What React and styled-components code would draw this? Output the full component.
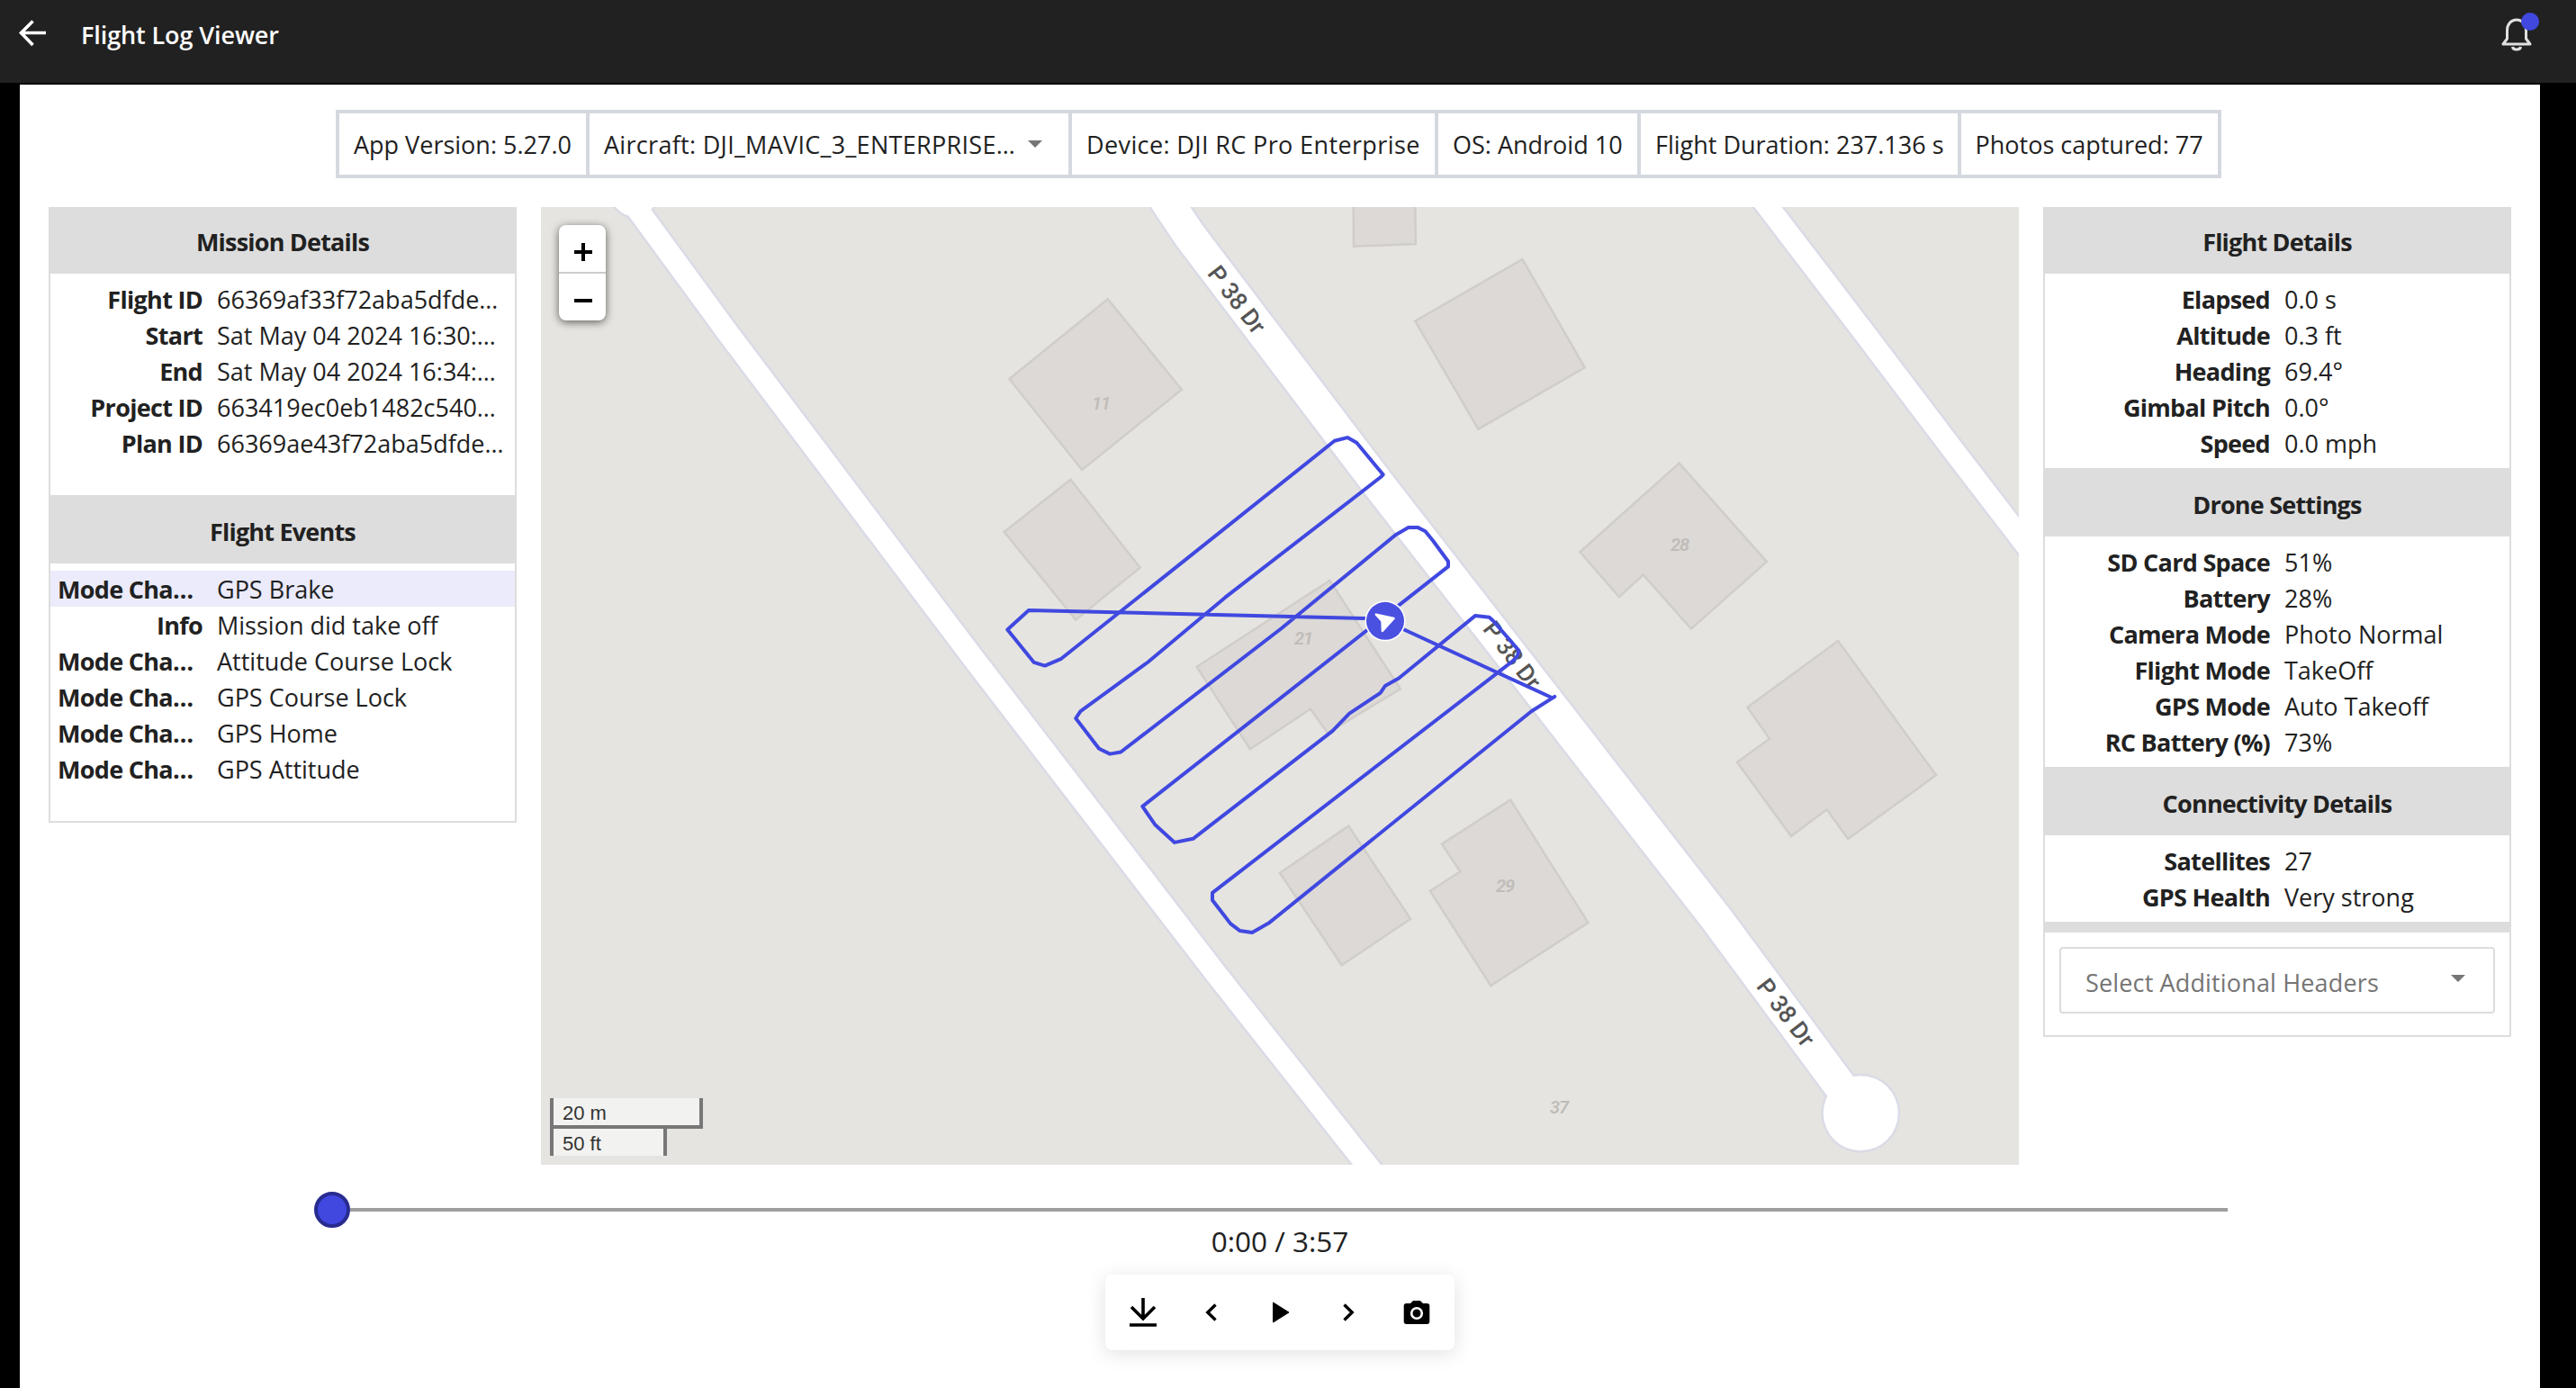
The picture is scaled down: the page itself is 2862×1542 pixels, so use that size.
import React from 'react';
import styled, { createGlobalStyle } from 'styled-components';

const GlobalStyle = createGlobalStyle`
  * {
    box-sizing: border-box;
  }

  body {
    margin: 0;
    background: #000000;
    color: #212121;
    font-family: "Open Sans", "Noto Sans", sans-serif;
    font-size: 27px;
  }
`;

const Page = styled.div`
  display: flex;
  flex-direction: column;
  height: 1542px;
  overflow: hidden;
`;

const TopBar = styled.header`
  display: flex;
  align-items: center;
  justify-content: space-between;
  height: 92px;
  padding: 0 48px 16px 20px;
  background: #212121;
  color: white;
`;

const TopLeft = styled.div`
  display: flex;
  align-items: center;
  gap: 38px;
`;

const Title = styled.h1`
  margin: 0;
  font-size: 27px;
  font-weight: 600;
  letter-spacing: -0.1px;
`;

const BellButton = styled.div`
  display: flex;
  position: relative;
`;

const Dot = styled.span`
  position: absolute;
  top: -4px;
  right: -7px;
  width: 20px;
  height: 20px;
  border-radius: 50%;
  background: #4048e0;
`;

const Content = styled.main`
  display: flex;
  flex-direction: column;
  flex: 1;
  margin: 2px 40px 0 22px;
  padding: 28px 32px 0;
  background: white;
`;

const InfoBar = styled.div`
  display: grid;
  grid-template-columns: 278px 536px 407px 225px 355.5px 285px;
  align-self: flex-start;
  height: 76px;
  margin-left: 319px;
  border: 4px solid #d5d9df;
`;

const InfoCell = styled.div`
  display: flex;
  align-items: center;
  padding-left: 16px;
  white-space: nowrap;
  letter-spacing: ${({ $spacing }) => $spacing || 0}px;
  border-right: 4px solid #d5d9df;

  &:last-child {
    border-right: none;
  }
`;

const Caret = styled.span`
  margin-left: ${({ $left }) => $left || 0}px;
  border-left: 8px solid transparent;
  border-right: 8px solid transparent;
  border-top: 8px solid #757575;
`;

const Columns = styled.div`
  display: flex;
  align-items: flex-start;
  gap: 27px;
  margin-top: 32px;
`;

const Panel = styled.section`
  width: 520px;
  border: 2px solid #dddddd;
  border-top: none;
`;

const PanelTitle = styled.h2`
  display: flex;
  align-items: center;
  justify-content: center;
  height: 76px;
  margin: 0;
  padding-top: 4px;
  background: #dddddd;
  font-size: 27px;
  font-weight: 700;
  letter-spacing: -0.8px;

  &:first-child {
    height: 74px;
    padding-top: 2px;
  }
`;

const Rows = styled.div`
  padding: 8px 0 ${({ $bottom }) => $bottom}px;
`;

const Row = styled.div`
  display: grid;
  grid-template-columns: ${({ $label }) => $label}px 1fr;
  column-gap: 16px;
  height: 40px;
  padding-left: 8px;
  line-height: 42px;
  white-space: nowrap;
  background: ${({ $active }) => ($active ? '#ebebfb' : 'transparent')};
`;

const Label = styled.span`
  font-weight: 700;
  letter-spacing: -0.7px;
  text-align: ${({ $clipped }) => ($clipped ? 'left' : 'right')};
`;

const Value = styled.span`
  letter-spacing: 0;
`;

const Strip = styled.div`
  height: 12px;
  background: #dddddd;
`;

const HeaderSelect = styled.div`
  display: flex;
  align-items: center;
  justify-content: space-between;
  height: 74px;
  margin: 16px 16px 24px;
  padding: 4px 31px 0 27px;
  border: 2px solid #dddddd;
  border-radius: 4px;
  color: #757575;
  letter-spacing: 0.15px;

  ${Caret} {
    margin-bottom: 8px;
  }
`;

const MapBox = styled.div`
  position: relative;
  width: 1642px;
  height: 1064px;
  background: #e5e4e0;

  > svg {
    display: block;
  }
`;

const ZoomControl = styled.div`
  position: absolute;
  top: 20px;
  left: 20px;
  width: 52px;
  border-radius: 8px;
  background: white;
  box-shadow: 0 2px 10px rgba(0, 0, 0, 0.6);
`;

const ZoomButton = styled.div`
  display: flex;
  align-items: center;
  justify-content: center;
  height: 52px;
  padding: 7px 0 0 2px;

  & + & {
    height: 54px;
    border-top: 2px solid #cccccc;
  }
`;

const Scale = styled.div`
  position: absolute;
  left: 10px;
  bottom: 10px;
`;

const ScaleLine = styled.div`
  width: ${({ $width }) => $width}px;
  height: ${({ $last }) => ($last ? 30 : 34)}px;
  padding: 2px 10px 0;
  border: 4px solid #777777;
  border-top: none;
  border-bottom-width: ${({ $last }) => ($last ? 0 : 4)}px;
  background: rgba(255, 255, 255, 0.5);
  background-clip: padding-box;
  color: #333333;
  font-family: "Liberation Sans", Arial, sans-serif;
  font-size: 22px;
  line-height: 30px;
`;

const Slider = styled.div`
  display: flex;
  align-items: center;
  margin: 30px 315px 0 295px;
`;

const Thumb = styled.div`
  width: 40px;
  height: 40px;
  border: 4px solid #282c8f;
  border-radius: 50%;
  background: #4048e0;
`;

const Track = styled.div`
  flex: 1;
  height: 4px;
  background: #9e9e9e;
`;

const Time = styled.div`
  height: 52px;
  font-size: 31.5px;
  line-height: 30px;
  text-align: center;
`;

const Controls = styled.div`
  display: flex;
  align-items: center;
  align-self: center;
  width: 388px;
  height: 84px;
  padding: 0 4px;
  border-radius: 8px;
  background: white;
  box-shadow: 0 4px 22px rgba(0, 0, 0, 0.12);
`;

const ControlButton = styled.div`
  display: flex;
  justify-content: center;
  width: 76px;
`;

const mission = [
  ['Flight ID', '66369af33f72aba5dfde…'],
  ['Start', 'Sat May 04 2024 16:30:…'],
  ['End', 'Sat May 04 2024 16:34:…'],
  ['Project ID', '663419ec0eb1482c540…'],
  ['Plan ID', '66369ae43f72aba5dfde…'],
];

const events = [
  ['Mode Cha…', 'GPS Brake'],
  ['Info', 'Mission did take off'],
  ['Mode Cha…', 'Attitude Course Lock'],
  ['Mode Cha…', 'GPS Course Lock'],
  ['Mode Cha…', 'GPS Home'],
  ['Mode Cha…', 'GPS Attitude'],
];

const flight = [
  ['Elapsed', '0.0 s'],
  ['Altitude', '0.3 ft'],
  ['Heading', '69.4°'],
  ['Gimbal Pitch', '0.0°'],
  ['Speed', '0.0 mph'],
];

const drone = [
  ['SD Card Space', '51%'],
  ['Battery', '28%'],
  ['Camera Mode', 'Photo Normal'],
  ['Flight Mode', 'TakeOff'],
  ['GPS Mode', 'Auto Takeoff'],
  ['RC Battery (%)', '73%'],
];

const connectivity = [
  ['Satellites', '27'],
  ['GPS Health', 'Very strong'],
];

const buildings = [
  '1230.8,332.3 1312.9,432.7 1202.2,522 1121.4,421',
  '1503.6,220 1572.3,220 1572.8,271 1504,273.7',
  '1691.5,288 1760.7,408.3 1642.4,476.7 1572.3,356.7',
  '1189.4,532.7 1266.6,630.6 1195.2,688.6 1115.7,591',
  '1477.3,644.9 1555.9,765.3 1475.1,814.3 1455.9,787.8 1388.9,832.2 1329.6,740.8',
  '1498.3,917.6 1567.1,1020.8 1490.7,1072.2 1422,969.8',
  '1678.2,888.6 1764.4,1025 1656.3,1095 1588.9,989.8 1622.4,968.2 1601.9,937.6',
  '1865.7,514.6 1962.9,623.9 1878.9,698.6 1825.7,638.6 1798.9,663.2 1755.4,613.2',
  '2042.1,712.1 2151.1,861.1 2053.2,932.1 2029.6,899.3 1990,928.9 1930,846.8 1966.1,820.7 1941.4,785.7',
];

const houseNumbers = [
  [1223, 455, '11'],
  [1448, 716, '21'],
  [1672, 991, '29'],
  [1866, 612, '28'],
  [1732, 1237, '37'],
];

const roads = [
  { width: 24, points: '692,210 710,235 808.8,370 1080,729.5 1349.6,1080 1518.5,1294 1540,1321' },
  { width: 36, points: '1286,208 1300.5,230 1322,262 1533,540 1780,857.7 1906.5,1020 2067,1237' },
  { width: 24, points: '1949,210 1964.4,230 2071.5,370 2170,500 2243,595 2262,620' },
];

const roadLabels = [
  [1374, 333],
  [1680, 728],
  [1984, 1125],
];

const flightPath =
  'M1538.9 689.8 L1725.1 775.5 L1727.3 773.9 L1701.4 790.2 L1410.4 1024.9 L1391.2 1035.9 L1377.3 1033.9 ' +
  'L1367.1 1026.1 L1347 1000 L1347 991.8 L1680.4 734.7 L1685.8 729 L1687.6 722.9 L1659 689.8 L1654.6 685.7 ' +
  'L1638.9 684.1 L1554.1 753.5 L1538.9 762 L1533.6 769.8 L1499.2 792.7 L1480.4 812.2 L1325.5 931.8 ' +
  'L1305 935.9 L1283.1 915.9 L1269.3 895.9 L1609 629.4 L1609 623.7 L1592.5 601.2 L1583.6 590.2 ' +
  'L1575.5 586.1 L1564.8 586.1 L1551 593.9 L1423.8 698 L1245.2 835.5 L1233.1 837.6 L1221.1 831.8 ' +
  'L1195.2 798 L1200.5 790.2 L1275.5 735.5 L1361.3 663.7 L1534 530 L1536.7 527.3 L1507.2 491.8 ' +
  'L1497 486.1 L1482.7 489.8 L1179.1 731.8 L1160.8 739.6 L1148.8 735.9 L1119.3 699.6 L1142.9 678 L1538.9 687.5';

const FlightMap = () => (
  <svg width="1642" height="1064" viewBox="601 230 1642 1064">
    <g fill="#dcd9d6" stroke="#d0cdca" strokeWidth="2.5">
      {buildings.map((points) => (
        <polygon key={points} points={points} />
      ))}
    </g>
    <g
      fill="#c0bcb9"
      fontFamily="Roboto, sans-serif"
      fontSize="20"
      fontStyle="italic"
      fontWeight="600"
      letterSpacing="-1"
      textAnchor="middle"
    >
      {houseNumbers.map(([x, y, text]) => (
        <text key={text} x={x} y={y}>{text}</text>
      ))}
    </g>
    <g fill="none" stroke="#dadbe6" strokeLinejoin="round">
      {roads.map((road) => (
        <polyline key={road.points} points={road.points} strokeWidth={road.width + 5} />
      ))}
    </g>
    <circle cx="705" cy="215" r="28" fill="#dadbe6" />
    <circle cx="2067.3" cy="1236.7" r="44" fill="#dadbe6" />
    <g fill="none" stroke="white" strokeLinejoin="round">
      {roads.map((road) => (
        <polyline key={road.points} points={road.points} strokeWidth={road.width} />
      ))}
    </g>
    <circle cx="705" cy="215" r="25.5" fill="white" />
    <circle cx="2067.3" cy="1236.7" r="41.5" fill="white" />
    <g fill="#555555" fontFamily="Roboto, sans-serif" fontSize="26.5" fontWeight="500" textAnchor="middle">
      {roadLabels.map(([x, y]) => (
        <text key={x} transform={`translate(${x} ${y}) rotate(52.5)`} y="9">P 38 Dr</text>
      ))}
    </g>
    <path d={flightPath} fill="none" stroke="#4048e0" strokeWidth="4" strokeLinejoin="round" />
    <circle cx="1539" cy="689.8" r="22.6" fill="white" />
    <circle cx="1539" cy="689.8" r="21" fill="#4a50e0" />
    <path
      d="M1528.8 682.6 L1548.6 686.9 L1535.9 701 L1535.5 690 Z"
      fill="white"
      stroke="white"
      strokeWidth="2.5"
      strokeLinejoin="round"
    />
  </svg>
);

const InfoRows = ({ rows, label, bottom, activeIndex }) => (
  <Rows $bottom={bottom}>
    {rows.map(([name, value], index) => (
      <Row key={index} $label={label} $active={index === activeIndex}>
        <Label $clipped={name.endsWith('…')}>{name}</Label>
        <Value>{value}</Value>
      </Row>
    ))}
  </Rows>
);

export default function App() {
  return (
    <>
      <GlobalStyle />
      <Page>
        <TopBar>
          <TopLeft>
            <svg width="32" height="32" viewBox="0 0 32 32" fill="none" stroke="white" strokeWidth="3.6">
              <path d="M31 14.5 H3.5 M16.5 1.5 L3.5 14.5 L16.5 28" />
            </svg>
            <Title>Flight Log Viewer</Title>
          </TopLeft>
          <BellButton>
            <svg width="36" height="40" viewBox="0 0 36 40" fill="none" stroke="#e0e0e0" strokeWidth="3">
              <path d="M3 31 H33 L28.500 25 V16 C28.500 8.500 24 4 18 4 C12 4 7.500 8.500 7.500 16 V25 Z" strokeLinejoin="round" />
              <path d="M13.500 34 C14 38 22 38 22.500 34" />
            </svg>
            <Dot />
          </BellButton>
        </TopBar>

        <Content>
          <InfoBar>
            <InfoCell>App Version: 5.27.0</InfoCell>
            <InfoCell $spacing={0.3}>
              Aircraft: DJI_MAVIC_3_ENTERPRISE…
              <Caret $left={14} />
            </InfoCell>
            <InfoCell $spacing={0.38}>Device: DJI RC Pro Enterprise</InfoCell>
            <InfoCell>OS: Android 10</InfoCell>
            <InfoCell>Flight Duration: 237.136 s</InfoCell>
            <InfoCell>Photos captured: 77</InfoCell>
          </InfoBar>

          <Columns>
            <Panel>
              <PanelTitle>Mission Details</PanelTitle>
              <InfoRows rows={mission} label={161} bottom={38} />
              <PanelTitle>Flight Events</PanelTitle>
              <InfoRows rows={events} label={161} bottom={38} activeIndex={0} />
            </Panel>

            <MapBox>
              <FlightMap />
              <ZoomControl>
                <ZoomButton>
                  <svg width="20" height="20" stroke="black" strokeWidth="4">
                    <path d="M0 10 H20 M10 0 V20" />
                  </svg>
                </ZoomButton>
                <ZoomButton>
                  <svg width="20" height="20" stroke="black" strokeWidth="4">
                    <path d="M0 10 H20" />
                  </svg>
                </ZoomButton>
              </ZoomControl>
              <Scale>
                <ScaleLine $width={170}>20 m</ScaleLine>
                <ScaleLine $width={130} $last>50 ft</ScaleLine>
              </Scale>
            </MapBox>

            <Panel>
              <PanelTitle>Flight Details</PanelTitle>
              <InfoRows rows={flight} label={242} bottom={8} />
              <PanelTitle>Drone Settings</PanelTitle>
              <InfoRows rows={drone} label={242} bottom={8} />
              <PanelTitle>Connectivity Details</PanelTitle>
              <InfoRows rows={connectivity} label={242} bottom={8} />
              <Strip />
              <HeaderSelect>
                Select Additional Headers
                <Caret />
              </HeaderSelect>
            </Panel>
          </Columns>

          <Slider>
            <Thumb />
            <Track />
          </Slider>
          <Time>0:00 / 3:57</Time>
          <Controls>
            <ControlButton>
              <svg width="30" height="32" fill="none" stroke="black" strokeWidth="3.6">
                <path d="M15 0 V23 M2 10 L15 23 L28 10 M0 30 H30" />
              </svg>
            </ControlButton>
            <ControlButton>
              <svg width="14" height="20" fill="none" stroke="black" strokeWidth="3.4">
                <path d="M11.500 1.500 L2.800 10 L11.500 18.500" />
              </svg>
            </ControlButton>
            <ControlButton>
              <svg width="20" height="26" viewBox="-1.500 0 20 26">
                <path d="M1 2 L18.500 13 L1 24 Z" stroke="black" strokeLinejoin="round" />
              </svg>
            </ControlButton>
            <ControlButton>
              <svg width="14" height="20" fill="none" stroke="black" strokeWidth="3.4">
                <path d="M2.500 1.500 L11.200 10 L2.500 18.500" />
              </svg>
            </ControlButton>
            <ControlButton>
              <svg width="30" height="28">
                <path d="M3.500 4 H8 L11 1 H19 L22 4 H26.500 Q29.300 4 29.300 6.500 V24 Q29.300 27 26.500 27 H3.500 Q0.700 27 0.700 24 V6.500 Q0.700 4 3.500 4 Z" />
                <circle cx="15" cy="15" r="5.800" fill="none" stroke="white" strokeWidth="2.600" />
              </svg>
            </ControlButton>
          </Controls>
        </Content>
      </Page>
    </>
  );
}
